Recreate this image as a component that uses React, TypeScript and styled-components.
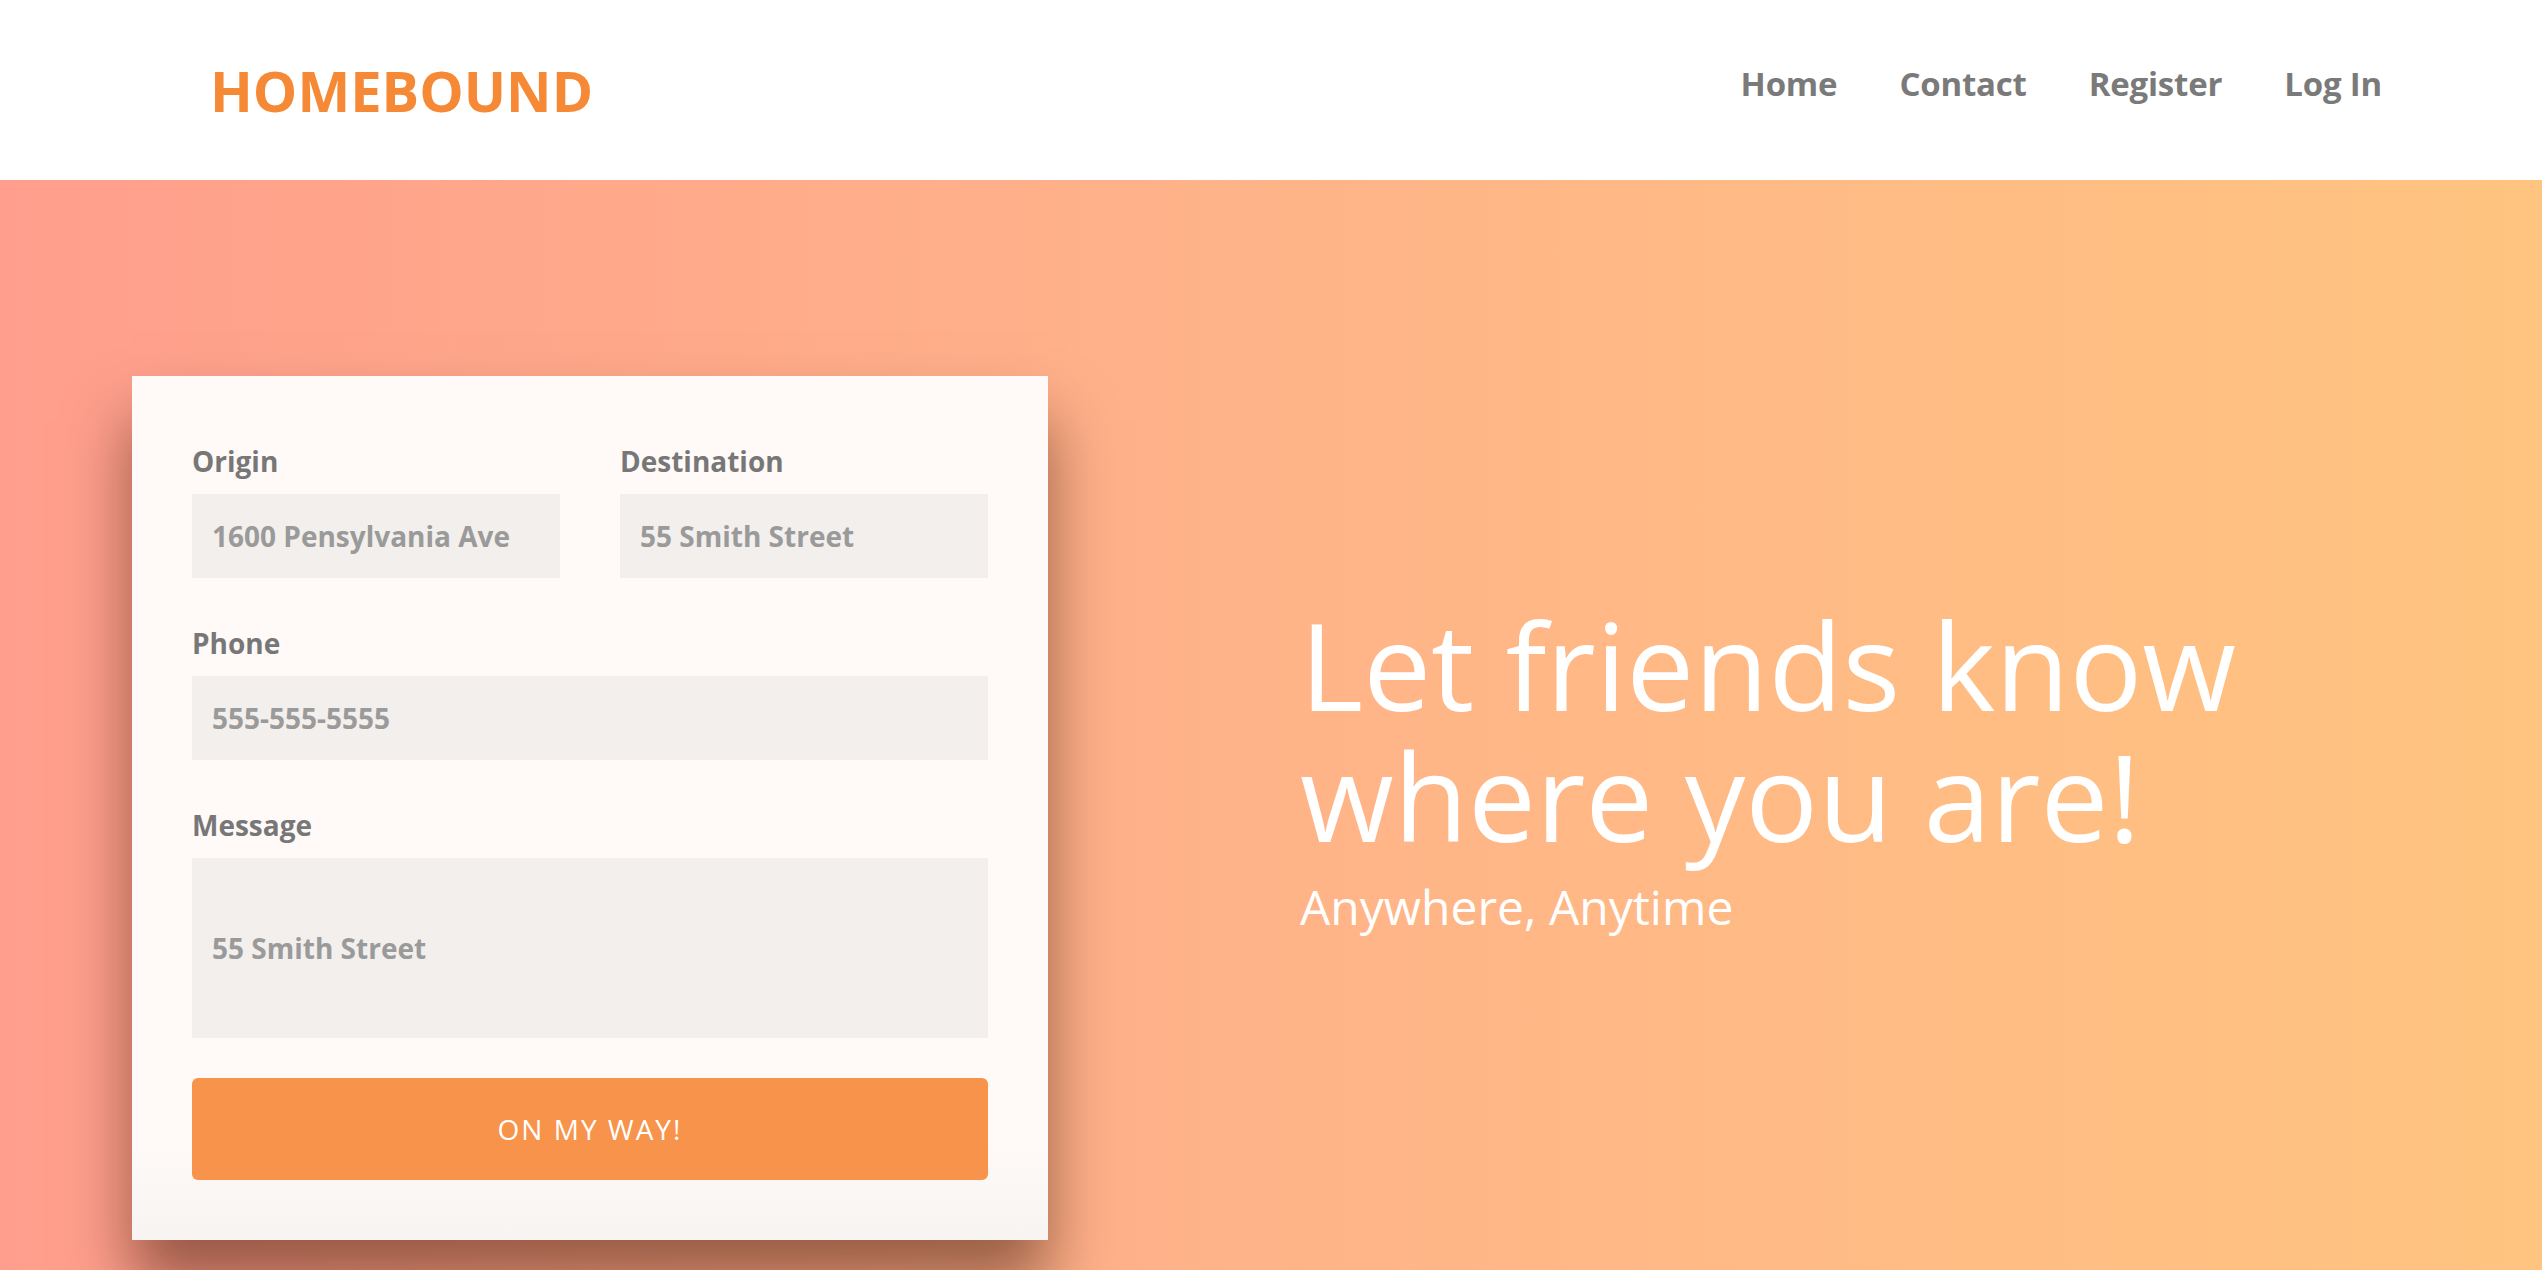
import React from "react";
import styled, { createGlobalStyle } from "styled-components";

const GlobalStyle = createGlobalStyle`
  html, body {
    margin: 0;
    padding: 0;
    background: #ffffff;
    font-family: "Open Sans", "Noto Sans", "Liberation Sans", sans-serif;
  }
  * { box-sizing: border-box; }
`;

const Page = styled.div`
  display: flex;
  flex-direction: column;
  min-height: 100vh;
  overflow: hidden;
`;

const Header = styled.header`
  height: 180px;
  flex: 0 0 180px;
  background: #ffffff;
  display: flex;
  align-items: center;
  justify-content: space-between;
  padding: 0 160px 0 210px;
`;

const Logo = styled.div`
  font-size: 56px;
  line-height: 56px;
  font-weight: 700;
  color: #f68935;
  letter-spacing: 0;
`;

const Nav = styled.nav`
  display: flex;
  align-items: center;
  gap: 62px;
  margin-bottom: 14px;
`;

const NavLink = styled.a`
  font-size: 33px;
  line-height: 33px;
  font-weight: 700;
  color: #7a7a7a;
  letter-spacing: -0.2px;
  text-decoration: none;
  cursor: pointer;
`;

const Hero = styled.main`
  flex: 1 0 auto;
  display: flex;
  align-items: flex-start;
  padding: 196px 0 0 132px;
  background: linear-gradient(to right, #ff9e8c 0%, #ffb289 45%, #ffc480 100%);
`;

const Card = styled.form`
  width: 916px;
  flex: 0 0 916px;
  padding: 66px 60px 60px;
  background: linear-gradient(to bottom, #fffaf8 0%, #fffaf8 88%, #f7f4f2 100%);
  box-shadow: 0 44px 60px rgba(50, 14, 0, 0.5);
  display: flex;
  flex-direction: column;
`;

const Row = styled.div`
  display: grid;
  grid-template-columns: 1fr 1fr;
  column-gap: 60px;
`;

const Field = styled.div<{ $gap?: boolean }>`
  display: flex;
  flex-direction: column;
  margin-top: ${(p) => (p.$gap ? "46px" : "0")};
`;

const Label = styled.label`
  font-size: 28px;
  line-height: 38px;
  font-weight: 700;
  color: #777777;
  margin-bottom: 14px;
`;

const TextInput = styled.input<{ $tall?: boolean }>`
  width: 100%;
  height: ${(p) => (p.$tall ? "180px" : "84px")};
  border: none;
  outline: none;
  background: #f2efec;
  padding: 0 20px;
  font-family: "Open Sans", "Noto Sans", sans-serif;
  font-size: 28px;
  font-weight: 700;
  color: #9a9a9a;
  &::placeholder {
    color: #9a9a9a;
    opacity: 1;
  }
`;

const SubmitButton = styled.button`
  margin-top: 40px;
  height: 102px;
  width: 100%;
  border: none;
  border-radius: 6px;
  background: #f7934a;
  color: #ffffff;
  font-family: "Open Sans", "Noto Sans", sans-serif;
  font-size: 28px;
  font-weight: 400;
  letter-spacing: 2px;
  text-transform: uppercase;
  cursor: pointer;
`;

const Intro = styled.section`
  margin: 223px 0 0 252px;
  color: #ffffff;
  display: flex;
  flex-direction: column;
`;

const Headline = styled.h1`
  margin: 0;
  font-size: 121px;
  line-height: 131px;
  font-weight: 400;
  letter-spacing: 0;
`;

const Tagline = styled.p`
  margin: 15px 0 0;
  font-size: 48px;
  line-height: 62px;
  font-weight: 400;
`;

export default function App() {
  return (
    <>
      <GlobalStyle />
      <Page>
        <Header>
          <Logo>HOMEBOUND</Logo>
          <Nav>
            <NavLink>Home</NavLink>
            <NavLink>Contact</NavLink>
            <NavLink>Register</NavLink>
            <NavLink>Log In</NavLink>
          </Nav>
        </Header>
        <Hero>
          <Card onSubmit={(e) => e.preventDefault()}>
            <Row>
              <Field>
                <Label>Origin</Label>
                <TextInput placeholder="1600 Pensylvania Ave" />
              </Field>
              <Field>
                <Label>Destination</Label>
                <TextInput placeholder="55 Smith Street" />
              </Field>
            </Row>
            <Field $gap>
              <Label>Phone</Label>
              <TextInput placeholder="555-555-5555" />
            </Field>
            <Field $gap>
              <Label>Message</Label>
              <TextInput $tall placeholder="55 Smith Street" />
            </Field>
            <SubmitButton type="submit">On my way!</SubmitButton>
          </Card>
          <Intro>
            <Headline>
              Let friends know
              <br />
              where you are!
            </Headline>
            <Tagline>Anywhere, Anytime</Tagline>
          </Intro>
        </Hero>
      </Page>
    </>
  );
}
